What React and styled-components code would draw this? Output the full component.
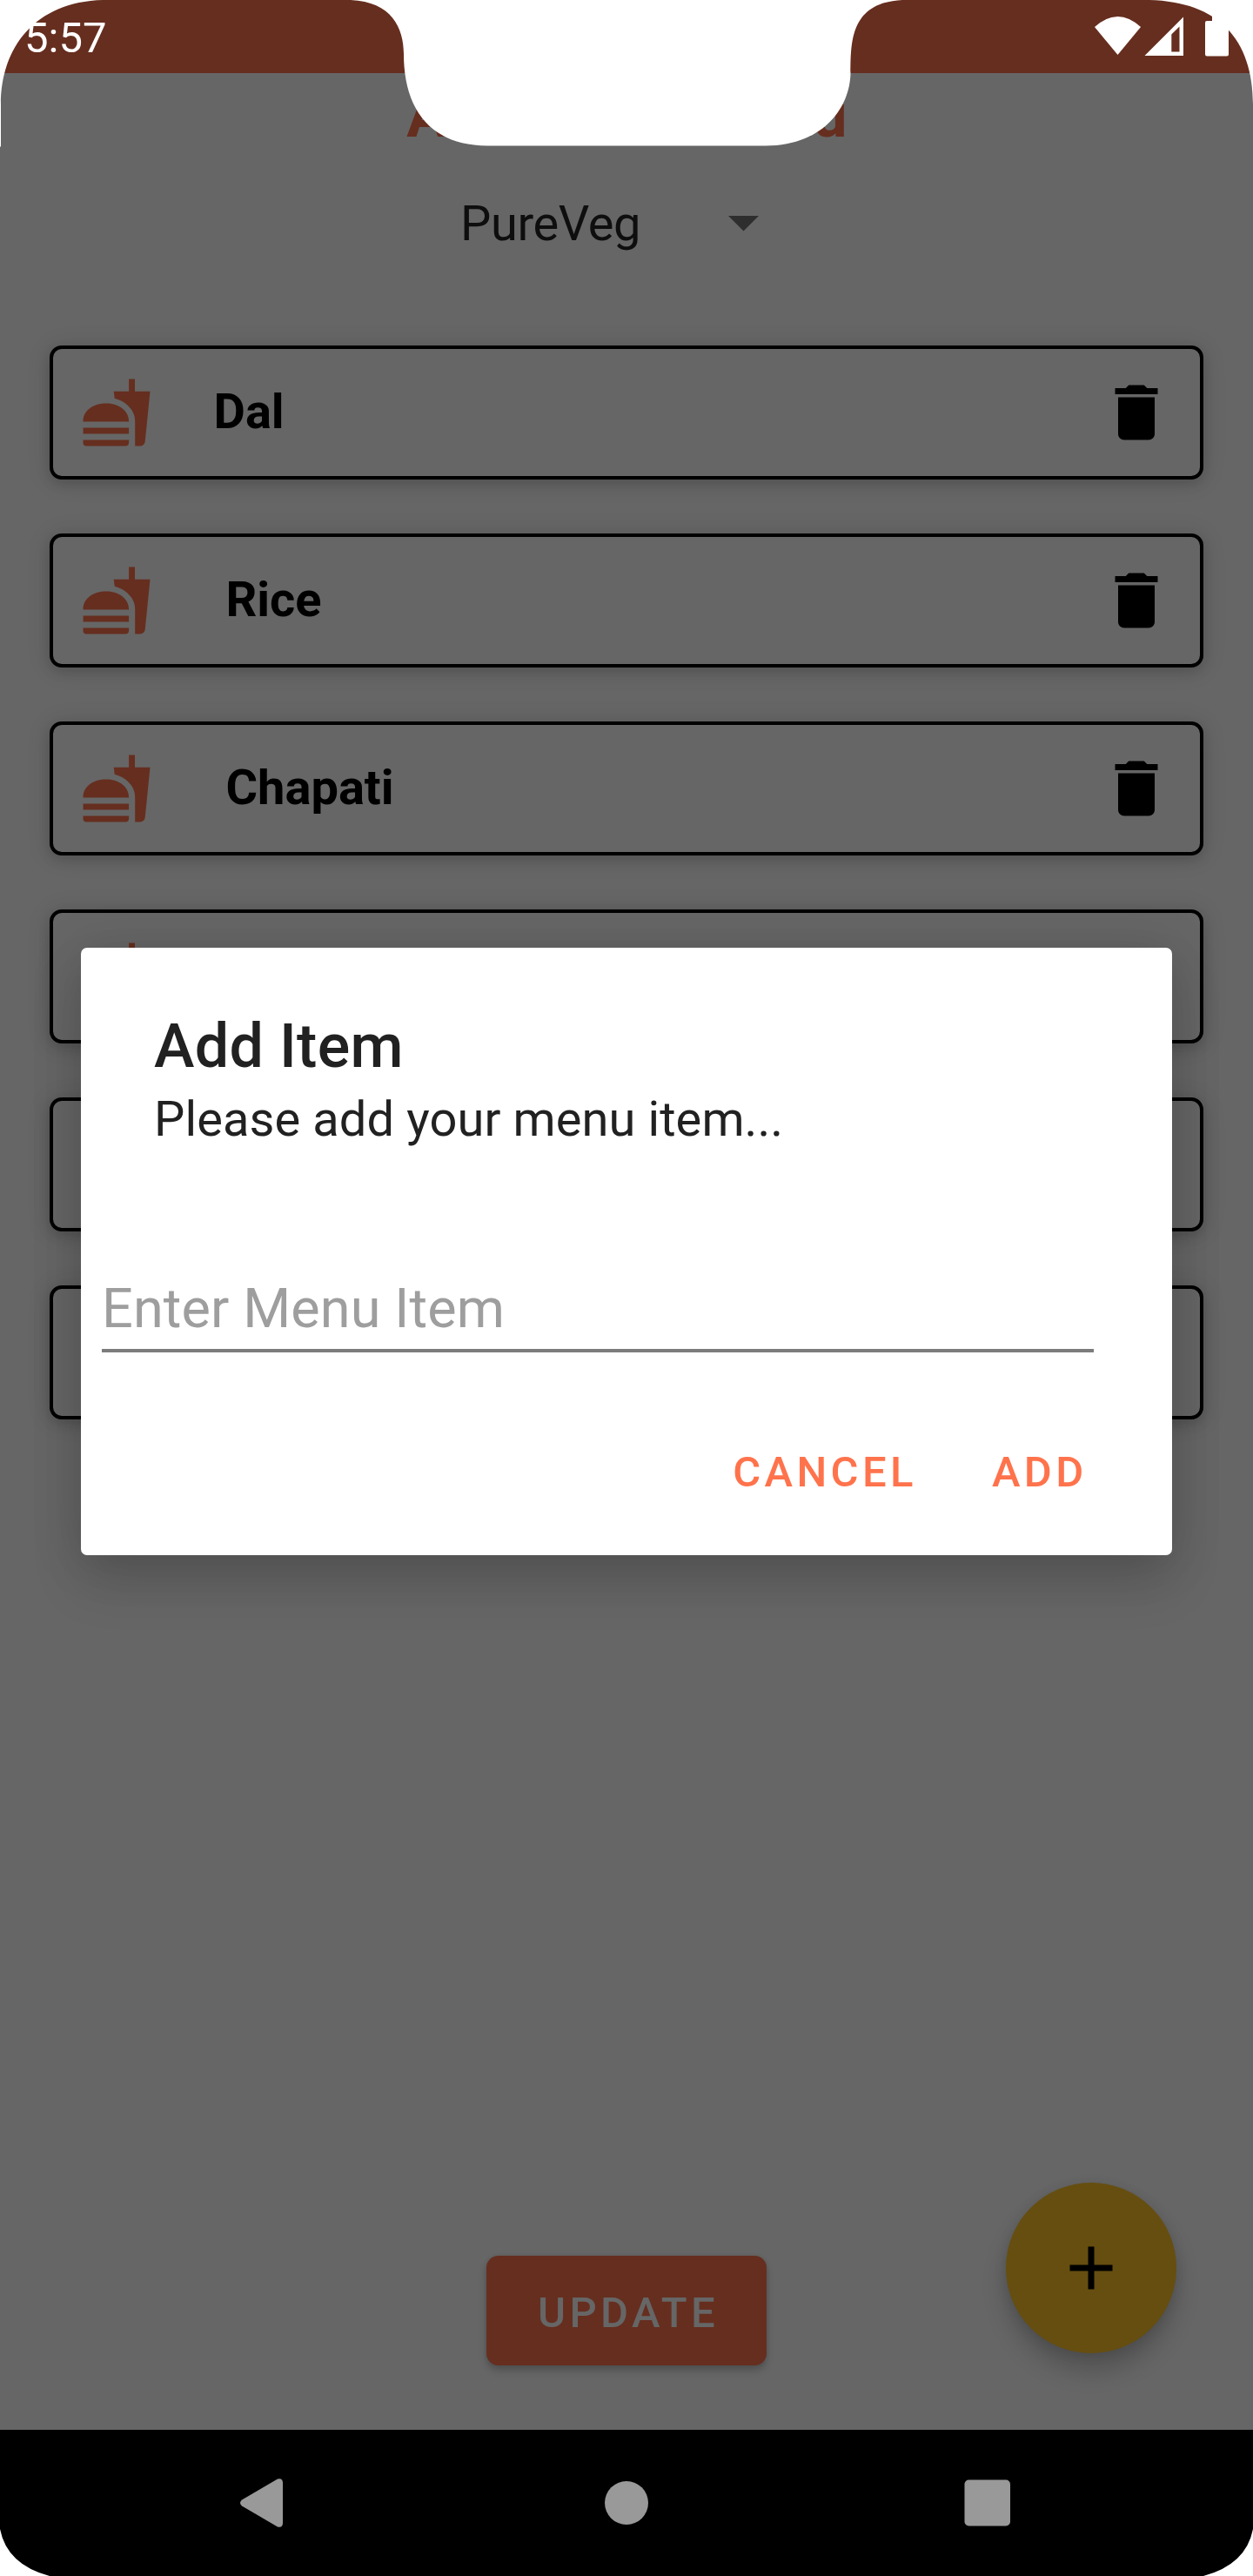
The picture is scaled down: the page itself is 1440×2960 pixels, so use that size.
import React from "react";
import styled, { createGlobalStyle } from "styled-components";

const Global = createGlobalStyle`
  *, *::before, *::after { box-sizing: border-box; }
  body { margin: 0; background: #fff; font-family: Roboto, "Liberation Sans", sans-serif; }
  h1, h2, p, ul { margin: 0; padding: 0; }
  button, input { font-family: inherit; border: 0; background: none; padding: 0; margin: 0; outline: 0; }
`;

const Phone = styled.div`
  position: relative;
  width: 1440px;
  height: 2960px;
  display: flex;
  flex-direction: column;
  overflow: hidden;
  background: #666;
`;

const StatusBar = styled.header`
  height: 84px;
  flex: none;
  display: flex;
  align-items: center;
  justify-content: space-between;
  padding-left: 28px;
  background: #662e1f;
  color: #fff;
`;

const Clock = styled.span`
  font-size: 49px;
  line-height: 56px;
  margin-top: 4px;
`;

const StatusIcons = styled.svg`
  width: 200px;
  height: 84px;
  display: block;
`;

const Content = styled.main`
  flex: 1;
  display: flex;
  flex-direction: column;
  align-items: center;
`;

const Heading = styled.h1`
  margin-top: 8px;
  font-size: 70px;
  line-height: 82px;
  font-weight: 700;
  letter-spacing: -0.8px;
  color: #662e1f;
`;

const Spinner = styled.div`
  align-self: flex-start;
  display: flex;
  align-items: center;
  justify-content: space-between;
  margin-top: 50px;
  margin-left: 529px;
  height: 66px;
  width: 343px;
  font-size: 56px;
  line-height: 66px;
  letter-spacing: -0.4px;
  color: #0e0e0e;
`;

const SpinnerValue = styled.span`
  flex: none;
`;

const Arrow = styled.svg`
  width: 35px;
  height: 18px;
  flex: none;
`;

const List = styled.ul`
  list-style: none;
  align-self: stretch;
  display: flex;
  flex-direction: column;
  gap: 62px;
  padding: 0 57px;
  margin-top: 107px;
`;

const Card = styled.li`
  height: 154px;
  display: flex;
  align-items: center;
  border: 4px solid #000;
  border-radius: 14px;
  padding: 0 31px;
  background: #666;
  box-shadow: 0 5px 14px rgba(0, 0, 0, 0.13), 0 2px 28px rgba(0, 0, 0, 0.12);
`;

const CardIcon = styled.svg`
  width: 84px;
  height: 84px;
  flex: none;
  fill: ${(p) => p.$color};
`;

const CardName = styled.span`
  flex: 1;
  padding-left: 69.5px;
  font-size: 56px;
  line-height: 66px;
  font-weight: 700;
  color: #000;
  white-space: pre;
  margin-top: -3px;
`;

const Actions = styled.div`
  margin-top: auto;
  margin-bottom: 74px;
  align-self: stretch;
  display: grid;
  grid-template-columns: 1fr 322px 1fr;
  align-items: end;
`;

const UpdateButton = styled.button`
  grid-column: 2;
  height: 126px;
  border-radius: 14px;
  background: #662e1f;
  color: #666;
  font-size: 49px;
  font-weight: 500;
  letter-spacing: 4.38px;
  padding-left: 4px;
  padding-top: 4px;
  box-shadow: 0 6px 8px rgba(0, 0, 0, 0.2), 0 0 4px rgba(0, 0, 0, 0.1);
`;

const Fab = styled.button`
  justify-self: end;
  margin-right: 88px;
  margin-bottom: 14px;
  width: 196px;
  height: 196px;
  border-radius: 50%;
  background: #664e10;
  display: flex;
  align-items: center;
  justify-content: center;
  box-shadow: 0 20px 28px rgba(0, 0, 0, 0.2), 0 2px 14px rgba(0, 0, 0, 0.1);
`;

const NavBar = styled.nav`
  height: 168px;
  flex: none;
  background: #000;
`;

const NavIcons = styled.svg`
  display: block;
  width: 1440px;
  height: 168px;
`;

const Dialog = styled.section`
  position: absolute;
  left: 93px;
  top: 1089px;
  width: 1254px;
  height: 698px;
  border-radius: 7px;
  background: #fff;
  display: flex;
  flex-direction: column;
  color: #212121;
  box-shadow: 0 32px 60px rgba(0, 0, 0, 0.14), 0 4px 60px rgba(0, 0, 0, 0.13);
`;

const DialogTitle = styled.h2`
  margin: 72px 84px 0;
  font-size: 70px;
  line-height: 82px;
  font-weight: 500;
  letter-spacing: 0.3px;
`;

const DialogText = styled.p`
  margin: 10px 84px 0;
  font-size: 56px;
  line-height: 66px;
  letter-spacing: 0.1px;
`;

const Field = styled.input`
  margin: 139px 90px 0 24px;
  width: 1140px;
  height: 96px;
  font-size: 63px;
  line-height: 74px;
  padding-bottom: 2px;
  letter-spacing: 0.1px;
  color: #212121;
  border-bottom: 4px solid #7c7c7c;
  &::placeholder { color: #9e9e9e; opacity: 1; }
`;

const DialogActions = styled.div`
  display: flex;
  justify-content: flex-end;
  gap: 86px;
  margin-top: 109px;
  padding-right: 97.5px;
`;

const TextButton = styled.button`
  color: #ff734c;
  font-size: 49px;
  line-height: 58px;
  font-weight: 500;
  letter-spacing: 4.38px;
`;

const ScreenMask = styled.svg`
  position: absolute;
  left: 0;
  top: 0;
  width: 1440px;
  height: 2960px;
  pointer-events: none;
`;

const FASTFOOD =
  "M18.06 22.99h1.66c.84 0 1.53-.64 1.63-1.46L23 5.05h-5V1h-1.97v4.05h-4.97l.3 2.34c1.71.47 3.31 1.32 4.27 2.26 1.44 1.42 2.43 2.89 2.43 5.29v8.05zM1 21.99V21h15.03v.99c0 .55-.45 1-1.01 1H2.01c-.56 0-1.01-.45-1.01-1zm15.03-7c0-8-15.03-8-15.03 0h15.03zM1.02 17h15v2h-15z";
const TRASH =
  "M6 19c0 1.1.9 2 2 2h8c1.1 0 2-.9 2-2V7H6v12zM19 4h-3.5l-1-1h-5l-1 1H5v2h14V4z";

const items = ["Dal", " Rice", " Chapati", "", "", ""];

export default function App() {
  return (
    <Phone>
      <Global />
      <StatusBar>
        <Clock>5:57</Clock>
        <StatusIcons viewBox="0 0 200 84" fill="#fff">
          <path d="M18 31Q44.500 7 71 31L44.500 63Z" />
          <path fillRule="evenodd" d="M75.500 64L120 19.500V64ZM106.300 59.500H115.500V30.500L106.300 39.500Z" />
          <path d="M153 18h11v6h6q2 0 2 2v36.500q0 2-2 2h-23q-2 0-2-2V26q0-2 2-2h6z" />
        </StatusIcons>
      </StatusBar>
      <Content>
        <Heading>Add Items Menu</Heading>
        <Spinner>
          <SpinnerValue>PureVeg</SpinnerValue>
          <Arrow viewBox="0 0 35 18"><path d="M0 0h35L17.500 17.500z" fill="#2e2e2e" /></Arrow>
        </Spinner>
        <List>
          {items.map((name, i) => (
            <Card key={i}>
              <CardIcon viewBox="0 0 24 24" $color="#662e1f"><path d={FASTFOOD} /></CardIcon>
              <CardName>{name}</CardName>
              <CardIcon viewBox="0 0 24 24" $color="#000"><path d={TRASH} /></CardIcon>
            </Card>
          ))}
        </List>
        <Actions>
          <UpdateButton>UPDATE</UpdateButton>
          <Fab aria-label="Add">
            <svg width="84" height="84" viewBox="0 0 24 24"><path d="M19 13h-6v6h-2v-6H5v-2h6V5h2v6h6v2z" /></svg>
          </Fab>
        </Actions>
      </Content>
      <NavBar>
        <NavIcons viewBox="0 0 1440 168" fill="#999">
          <path d="M278 80.500Q274 84 278 87.500L319 111.500Q325 113 325 107V61Q325 55 319 56.500Z" />
          <circle cx="720" cy="84" r="25" />
          <rect x="1108.500" y="57.500" width="52.500" height="53" rx="5" />
        </NavIcons>
      </NavBar>
      <Dialog>
        <DialogTitle>Add Item</DialogTitle>
        <DialogText>Please add your menu item...</DialogText>
        <Field placeholder="Enter Menu Item" />
        <DialogActions>
          <TextButton>CANCEL</TextButton>
          <TextButton>ADD</TextButton>
        </DialogActions>
      </Dialog>
      <ScreenMask viewBox="0 0 1440 2960" fill="#fff">
        <path d="M0 0H118C40 2 1 55 1 120V168.500H0Z" />
        <path d="M403 0C450 2 464 32 464 62C464 120 490 167 560 167.500H880C950 167 977 120 977.500 84C978 50 976 3 1037 0Z" />
        <path d="M1321 0C1400 2 1440 45 1440 120V0Z" />
        <path d="M0 2906Q8 2947 57 2960H0ZM1440 2906Q1432 2947 1383 2960H1440Z" />
      </ScreenMask>
    </Phone>
  );
}
